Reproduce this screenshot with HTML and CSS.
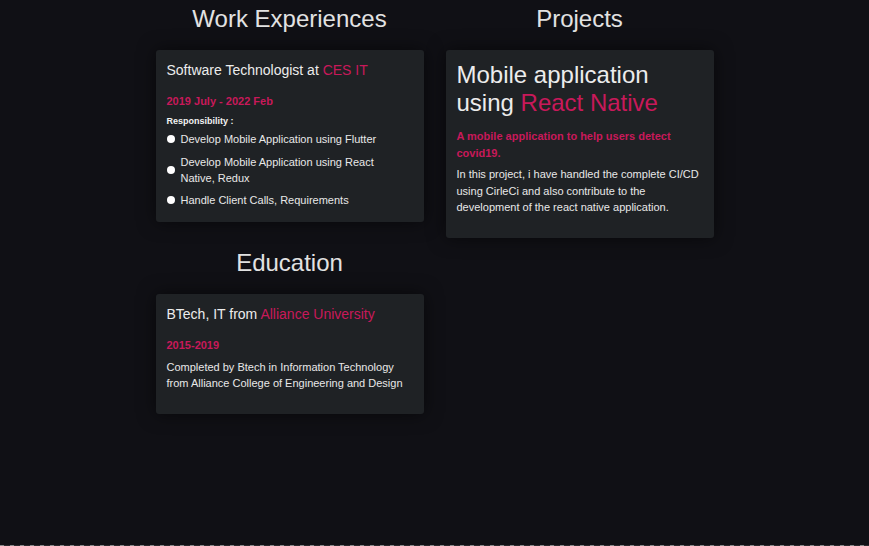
FILE: index.html
```html
<!DOCTYPE html>
<html lang="en">
<head>
<meta charset="utf-8">
<title>Experience</title>
<link rel="stylesheet" href="styles.css">
</head>
<body>
<div class="page">
  <main class="grid">
    <div class="column">
      <section class="section">
        <h2 class="section-title">Work Experiences</h2>
        <article class="card">
          <h3 class="card-title">Software Technologist at <span class="accent">CES IT</span></h3>
          <p class="meta">2019 July - 2022 Feb</p>
          <p class="label">Responsibility :</p>
          <ul class="list">
            <li class="item"><span class="dot"></span><span>Develop Mobile Application using Flutter</span></li>
            <li class="item"><span class="dot"></span><span>Develop Mobile Application using React Native, Redux</span></li>
            <li class="item"><span class="dot"></span><span>Handle Client Calls, Requirements</span></li>
          </ul>
        </article>
      </section>
      <section class="section">
        <h2 class="section-title">Education</h2>
        <article class="card">
          <h3 class="card-title">BTech, IT from <span class="accent">Alliance University</span></h3>
          <p class="meta">2015-2019</p>
          <p class="text">Completed by Btech in Information Technology from Alliance College of Engineering and Design</p>
        </article>
      </section>
    </div>
    <div class="column">
      <section class="section">
        <h2 class="section-title">Projects</h2>
        <article class="card">
          <h3 class="project-title">Mobile application using <span class="accent">React Native</span></h3>
          <p class="meta">A mobile application to help users detect covid19.</p>
          <p class="text">In this project, i have handled the complete CI/CD using CirleCi and also contribute to the development of the react native application.</p>
        </article>
      </section>
    </div>
  </main>
</div>
<div class="rule"></div>
</body>
</html>
```

FILE: styles.css
```css
* {
  box-sizing: border-box;
}

html, body {
  margin: 0;
  padding: 0;
  background: #101015;
}

body {
  font-family: "Liberation Sans", Arial, Helvetica, sans-serif;
  color: #e8e8e8;
}

.page {
  min-height: 545px;
  padding-top: 5px;
}

.rule {
  height: 1px;
  background: repeating-linear-gradient(90deg, #8a8a8a 0 4px, #2a2a2e 4px 10px);
}

.grid {
  display: grid;
  grid-template-columns: 268px 268px;
  column-gap: 22px;
  justify-content: center;
  align-items: start;
}

.column {
  display: flex;
  flex-direction: column;
  gap: 27px;
}

.section-title {
  margin: 0 0 17px;
  font-size: 24px;
  font-weight: 400;
  line-height: normal;
  text-align: center;
  color: #e2e2e2;
}

.card {
  background: #1f2225;
  border-radius: 3px;
  padding: 12px 11px 11px;
  box-shadow: 0 0 18px rgba(0, 0, 0, 0.55);
}

.card-title {
  margin: 0 0 15px;
  font-size: 14px;
  font-weight: 400;
  line-height: normal;
  color: #ececec;
}

.project-title {
  margin: -1px 0 11px;
  font-size: 24px;
  font-weight: 400;
  line-height: 28px;
  color: #ececec;
}

.accent {
  color: #c8195a;
}

.meta {
  margin: 0 0 5px;
  font-size: 11px;
  font-weight: 700;
  line-height: 16.5px;
  color: #c8195a;
}

.label {
  margin: 0 0 3px;
  font-size: 9px;
  font-weight: 700;
  line-height: 13.5px;
  color: #f2f2f2;
}

.list {
  list-style: none;
  margin: 0 0 3px;
  padding: 0 5px 0 0;
  display: flex;
  flex-direction: column;
  gap: 6.5px;
}

.item {
  display: flex;
  align-items: center;
  gap: 6px;
  font-size: 11px;
  line-height: 16px;
  color: #e8e8e8;
}

.dot {
  flex: none;
  width: 8px;
  height: 8px;
  border-radius: 50%;
  background: #ffffff;
}

.text {
  margin: 0 0 11px;
  font-size: 11px;
  line-height: 16.5px;
  color: #e8e8e8;
}
```
